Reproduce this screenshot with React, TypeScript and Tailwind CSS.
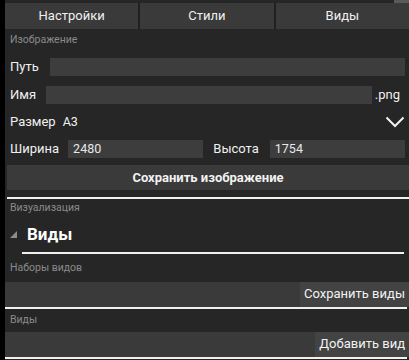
import React from "react";

const font = { fontFamily: "Roboto, 'Noto Sans', sans-serif" };

const SectionLabel = ({ text, className }: { text: string; className: string }) => (
  <div className={`flex items-center pl-[5px] text-[10.5px] text-[#8a8a8a] ${className}`}>{text}</div>
);

const Field = ({ value }: { value?: string }) => (
  <div className="h-[18px] flex-1 bg-[#3d3d3d] flex items-center px-[5px] text-[12.5px] text-[#e8e8e8]">{value}</div>
);

const ActionBar = ({ label }: { label: string }) => (
  <div className="flex flex-col">
    <div className="h-[25px] flex bg-[#3a3a3a]">
      <div className="flex-1" />
      <div className="bg-[#434343] flex items-center pl-[4px] pr-[4px] text-[13px] text-[#f2f2f2]">{label}</div>
    </div>
    <div className="h-[2px] bg-[#f0f0f0] mr-[2px]" />
  </div>
);

export default function App() {
  return (
    <div className="flex w-[409px] h-[360px] bg-[#262626] overflow-hidden" style={font}>
      <div className="w-[5px] bg-black shrink-0" />
      <div className="flex-1 flex flex-col">
        <div className="h-[3px] flex justify-end">
          <div className="w-[15px] bg-[#5a5a5a]" />
        </div>
        <div className="h-[26px] flex gap-[2px] bg-[#202020] text-[13px] text-[#f0f0f0]">
          <div className="flex-1 bg-[#3a3a3a] flex items-center justify-center">Настройки</div>
          <div className="flex-1 bg-[#3a3a3a] flex items-center justify-center">Стили</div>
          <div className="flex-1 bg-[#3a3a3a] flex items-center justify-center">Виды</div>
        </div>

        <SectionLabel text="Изображение" className="h-[22px]" />

        <div className="mt-[7px] h-[18px] flex items-center gap-[11px] pl-[5px] pr-[4px] text-[13px] leading-[18px] text-[#f0f0f0]">
          <span>Путь</span>
          <Field />
        </div>
        <div className="mt-[10px] h-[18px] flex items-center gap-[10px] pl-[5px] pr-[9px] text-[13px] leading-[18px] text-[#f0f0f0]">
          <span>Имя</span>
          <Field />
          <span className="-ml-[7px]">.png</span>
        </div>
        <div className="mt-[6px] h-[24px] flex items-center pl-[5px] pr-[3px] text-[13px] text-[#f0f0f0]">
          <span>Размер</span>
          <span className="ml-[7px] text-[12.5px]">A3</span>
          <div className="flex-1" />
          <svg width="20" height="12" viewBox="0 0 20 12" className="mr-[1px]">
            <path d="M1.5 1.5 L10 10 L18.5 1.5" fill="none" stroke="#f2f2f2" strokeWidth="2" />
          </svg>
        </div>
        <div className="mt-[6px] h-[18px] flex items-center pl-[5px] pr-[4px] text-[13px] leading-[18px] text-[#f0f0f0]">
          <span>Ширина</span>
          <div className="ml-[9px] flex-1 flex"><Field value="2480" /></div>
          <span className="ml-[10px]">Высота</span>
          <div className="ml-[11px] flex-1 flex"><Field value="1754" /></div>
        </div>
        <div className="mt-[7px] ml-[2px] h-[25px] bg-[#3a3a3a] flex items-center justify-center text-[13px] font-bold text-[#f2f2f2]">
          Сохранить изображение
        </div>
        <div className="mt-[7px] ml-[2px] h-[2px] bg-[#f0f0f0]" />

        <SectionLabel text="Визуализация" className="h-[18px]" />

        <div className="h-[35px] flex items-center pl-[5px] text-[17px] font-bold text-white">
          <svg width="7" height="7" viewBox="0 0 7 7">
            <polygon points="7,0 7,7 0,7" fill="#8c8c8c" />
          </svg>
          <span className="ml-[10px]">Виды</span>
        </div>
        <div className="ml-[17px] mr-[5px] h-[1.5px] bg-[#f0f0f0]" />

        <SectionLabel text="Наборы видов" className="h-[28px]" />
        <ActionBar label="Сохранить виды" />

        <SectionLabel text="Виды" className="h-[23px]" />
        <ActionBar label="Добавить вид" />
      </div>
    </div>
  );
}
